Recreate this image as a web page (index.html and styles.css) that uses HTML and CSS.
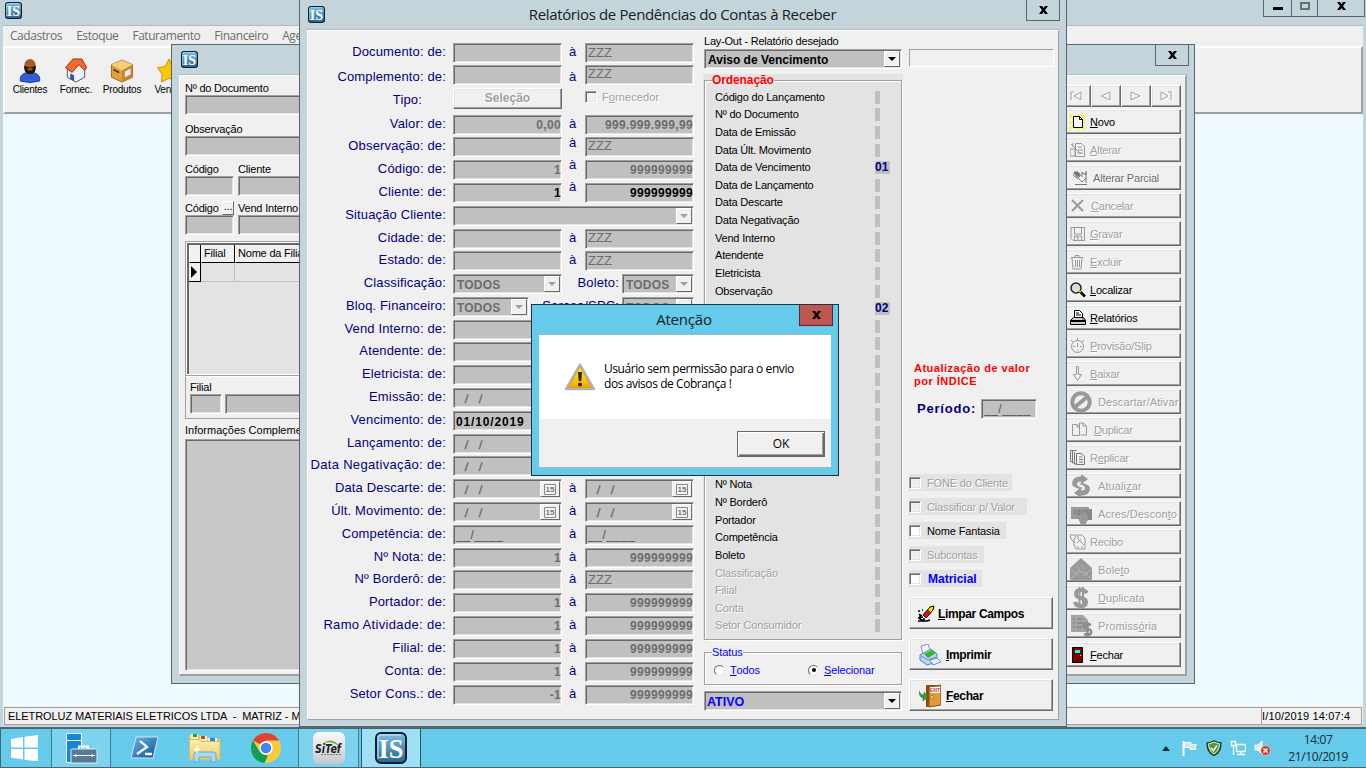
FILE: index.html
```html
<!DOCTYPE html>
<html lang="pt-BR">
<head>
<meta charset="utf-8">
<title>Relatórios de Pendências do Contas à Receber</title>
<link rel="stylesheet" href="styles.css">
</head>
<body>
<svg class="defs" aria-hidden="true">
  <defs>
    <linearGradient id="isg" x1="0" y1="0" x2="0" y2="1"><stop offset="0" stop-color="#7fc0e6"/><stop offset="1" stop-color="#25658f"/></linearGradient>
    <linearGradient id="warn" x1="0" y1="0" x2="0" y2="1"><stop offset="0" stop-color="#fff21a"/><stop offset="1" stop-color="#f5a800"/></linearGradient>
    <linearGradient id="blue" x1="0" y1="0" x2="1" y2="1"><stop offset="0" stop-color="#6db8e8"/><stop offset="1" stop-color="#0d4f92"/></linearGradient>
    <linearGradient id="folder" x1="0" y1="0" x2="0" y2="1"><stop offset="0" stop-color="#fff0b4"/><stop offset="1" stop-color="#ecc860"/></linearGradient>
    <symbol id="is" viewBox="0 0 32 32"><rect x="1" y="1" width="30" height="30" rx="5" fill="url(#isg)" stroke="#10202c" stroke-width="2"/><path d="M3 27V6q0-3 3-3h20" fill="none" stroke="#b4def4" stroke-width="1.300"/><text x="16" y="26" text-anchor="middle" textLength="25" lengthAdjust="spacingAndGlyphs" class="is-text">IS</text></symbol>
    <symbol id="cal" viewBox="0 0 12 11"><path d="M.5.500h11v10H.5z" fill="#f4f4f4" stroke="#888"/><text x="6" y="8.200" text-anchor="middle" class="cal-text">15</text></symbol>
  </defs>
</svg>

<main class="desktop">
  <section class="win main-win">
    <header class="main-title">
      <svg class="is16"><use href="#is"/></svg>
      <div class="caption-buttons">
        <span class="cap-min"><svg width="10" height="10"><path d="M0 6h10v3H0z"/></svg></span>
        <span class="cap-max"><svg width="10" height="8"><path d="M1 1h8v6H1z" fill="none" stroke="#667075" stroke-width="2"/></svg></span>
        <span class="cap-close"><svg width="9" height="8"><path d="M0 0h3l1.500 2L6 0h3L6 4l3 4H6L4.500 6 3 8H0l3-4z"/></svg></span>
      </div>
    </header>
    <nav class="menu"><span>Cadastros</span><span>Estoque</span><span>Faturamento</span><span>Financeiro</span><span>Agenda</span></nav>
    <div class="toolbar">
      <div class="tool"><svg width="24" height="26" viewBox="0 0 24 26"><path d="M2 24c-1-6 3-9 10-9s11 3 10 9q-10 3-20 0z" fill="#2f5fd8" stroke="#1c3a94"/><ellipse cx="12" cy="8" rx="6" ry="7" fill="#a85c24"/><path d="M6 8q6 3 12 0 1 8-6 9-7-1-6-9z" fill="#20140e"/><path d="M9 11q3-2 6 0l-1 2h-4z" fill="#985020"/></svg><b>Clientes</b></div>
      <div class="tool"><svg width="24" height="26" viewBox="0 0 24 26"><path d="M3 11l9-9 9 9v9l-9 5-9-5z" fill="#eef2f8" stroke="#555"/><path d="M1 10L9 1h9l5 9-2 3-6-6-7 8z" fill="#f46a28" stroke="#9c2c10"/><path d="M6 16l4 2v6l-4-2z" fill="#2e55a8"/></svg><b>Fornec.</b></div>
      <div class="tool"><svg width="26" height="26" viewBox="0 0 26 26"><path d="M2 7l11-5 11 5v13l-11 5-11-5z" fill="#e0a03c" stroke="#9c6820"/><path d="M2 7l11-5 11 5-11 6z" fill="#f6cd7c"/><path d="M13 13l11-6v13l-11 5z" fill="#c98628"/><path d="M16 14l6-3v6l-6 3z" fill="#e8f0ff"/><path d="M4 13l6 3v-2l-6-3z" fill="#5c3a10"/></svg><b>Produtos</b></div>
      <div class="tool"><svg width="26" height="26" viewBox="0 0 26 26"><path d="M13 1l3 7 9 1-5 8 2 8-9-4-8 4 1-8-5-7 8-1z" fill="#fcc800" stroke="#d08800"/></svg><b>Vendas</b></div>
    </div>
    <div class="mdi"></div>
    <footer class="status"><span class="status-main">ELETROLUZ MATERIAIS ELETRICOS LTDA &nbsp;- &nbsp;MATRIZ - M</span><span class="status-time">I/10/2019 14:07:4</span></footer>
  </section>

  <section class="win doc-win">
    <header class="doc-title"><svg class="is16"><use href="#is"/></svg><span class="close"><svg width="9" height="8"><path d="M0 0h3l1.500 2L6 0h3L6 4l3 4H6L4.500 6 3 8H0l3-4z"/></svg></span></header>
    <div class="doc-body">
      <div class="doc-left">
        <div class="lbl">Nº do Documento</div><div class="field first"></div>
        <div class="lbl">Observação</div><div class="field"></div>
        <div class="pair"><div><div class="lbl">Código</div><div class="field"></div></div><div><div class="lbl">Cliente</div><div class="field"></div></div></div>
        <div class="pair"><div><div class="lbl">Código <i class="dots">...</i></div><div class="field"></div></div><div><div class="lbl">Vend Interno</div><div class="field"></div></div></div>
        <div class="table">
          <div class="tr th"><span></span><span>Filial</span><span>Nome da Filial</span></div>
          <div class="tr"><span class="sel"><svg width="6" height="12"><path d="M0 0l6 6-6 6z"/></svg></span><span></span><span></span></div>
        </div>
        <div class="branch"><div class="lbl">Filial</div><div class="branch-row"><div class="field"></div><div class="field"></div></div></div>
        <div class="lbl info">Informações Complementares</div>
        <div class="field memo"></div>
      </div>
      <aside class="actions">
        <div class="navs">
          <span><svg width="12" height="10"><path d="M1 9V1h3M11 1v8L4 5l7-4"/></svg></span><span><svg width="12" height="10"><path d="M10 1v8L1 5l9-4"/></svg></span><span><svg width="12" height="10"><path d="M1 1v8l9-4-9-4"/></svg></span><span><svg width="12" height="10"><path d="M1 1v8l7-4-7-4M8 1h3v8"/></svg></span>
        </div>
        <div class="act on"><svg width="16" height="16"><path d="M0 1l3 3M15 1l-3 3M0 15l3-3M15 15l-3-3M0 8h3M15 8h-3M8 0v2M8 14v2" stroke="#ff0" stroke-width="2"/><path d="M3.500 2.500h6l3 3v8h-9z" fill="#fff" stroke="#000"/><path d="M9.500 2.500v3h3" fill="none" stroke="#000"/></svg><span><u>N</u>ovo</span></div>
        <div class="act"><svg width="16" height="16" class="ln"><path d="M5.500 1.500h6l3 3v10h-9zM1 2l10 10M0 7h5v7H0zM3 1v4M8 5h4M8 8h5M7 11h6"/></svg><span><u>A</u>lterar</span></div>
        <div class="act mid i3"><svg width="16" height="16" class="ln dark"><path d="M1.500 2.500h4l2 3-3 3-4-3zM8 2l5 3V1M5 8l4 4 4-4V2M13 8v5M2 14.500h12M9 3v4"/><path d="M1 2h4l2 3-3 2z" fill="#777"/></svg><span>Alterar Parcial</span></div>
        <div class="act i1"><svg width="16" height="16" class="ln thick"><path d="M2 2l11 11M13 2L2 13"/></svg><span><u>C</u>ancelar</span></div>
        <div class="act"><svg width="16" height="16" class="ln"><path d="M1 1.500h13.500v13H3l-2-2zM4.500 2v6h7V2M4.500 14v-4h7v4M6 11h2v3"/></svg><span><u>G</u>ravar</span></div>
        <div class="act"><svg width="16" height="16" class="ln"><path d="M1 3.500h12M5 3V1.500h4V3M2 4l1 11h8l1-11M5.500 6v7M7.500 6v7M9.500 6v7"/></svg><span><u>E</u>xcluir</span></div>
        <div class="act on"><svg width="16" height="16"><circle cx="6" cy="6" r="5" fill="#ddd" stroke="#222" stroke-width="1.500"/><path d="M10 9.500l5 5" stroke="#000" stroke-width="2.500"/><path d="M9 9l2 1" stroke="#e0d800" stroke-width="1.500"/></svg><span><u>L</u>ocalizar</span></div>
        <div class="act on"><svg width="16" height="16"><path d="M4.500 7.500V.500h5l3 3v4" fill="#fff" stroke="#000"/><path d="M6 3h3M6 5h5" stroke="#000"/><path d="M.5 10.500l3-3h10l2 3v4H.5z" fill="#ccc" stroke="#000"/><path d="M0 11h16" stroke="#000" stroke-width="2"/><path d="M12 9h2" stroke="red"/></svg><span><u>R</u>elatórios</span></div>
        <div class="act"><svg width="16" height="16" class="ln"><circle cx="7.500" cy="8.500" r="6"/><path d="M7.500 0v3M7.500 5v4M1 2l2 2M14 2l-2 2M3 8.500h2M10 8.500h2M7.500 12v1"/></svg><span><u>P</u>rovisão/Slip</span></div>
        <div class="act"><svg width="16" height="16" class="ln"><path d="M6.500.500h2v8h3l-4 6-4-6h3z"/></svg><span><u>B</u>aixar</span></div>
        <div class="act i8"><svg width="24" height="24"><circle cx="12" cy="12" r="8.700" fill="none" stroke="#999" stroke-width="4"/><path d="M6 17L18 7" stroke="#999" stroke-width="4"/></svg><span>Descartar/Ativar</span></div>
        <div class="act i4"><svg width="18" height="16" class="ln"><path d="M2.500 2.500h5l2 2v9h-7zM9.500 5v-4h4l3 3v9h-6M13 1v3h3M7 3v2h2"/></svg><span><u>D</u>uplicar</span></div>
        <div class="act"><svg width="16" height="16" class="ln dark"><path d="M.5.500h6M.5.500v11h2M2.500 1v12h2M4.500 2v12h2M6.500 3.500h5l3 3v8h-8zM9 7h3M9 9.500h4M9 12h4"/></svg><span>R<u>e</u>plicar</span></div>
        <div class="act i8"><svg width="24" height="24"><path d="M3 9Q4 2 12 2.500V0l7 5-7 5.500V7.500Q8 7.500 8 10q0 2 3 3l3 1q-3 2-6 0-5-1-5-5z" fill="#999"/><path d="M21 15q-1 7-9 6.500V24l-7-5 7-5.500v3q4 0 4-2.500 0-2-3-3l-3-1q3-2 6 0 5 1 5 5z" fill="#999"/></svg><span>Atuali<u>z</u>ar</span></div>
        <div class="act i8"><svg width="24" height="24"><path d="M2 5h18v12H2z" fill="#999"/><path d="M20 7h3v11h-5" fill="#888"/><path d="M6 8v5M9 8.500h2v4H9zM14 13V9l4-1v5" fill="none" stroke="#777"/><path d="M8 14l3 2v-4h6l2 6-3 5h-4z" fill="#999"/></svg><span>Acres/Descon<u>t</u>o</span></div>
        <div class="act"><svg width="16" height="16" class="ln"><path d="M0 1h7l-3 4v6l2 4h9V4l-3-3H8v4l6 6M0 1l1 4 4 4M7 9l4-4M7 13h2M11 13h2"/></svg><span>Recibo</span></div>
        <div class="act i8"><svg width="24" height="24"><path d="M1 10L12 0l11 10v13H1z" fill="#999"/><path d="M1 22l8-8h6l8 8M1 11l9 7M23 11l-9 7M8 8l3 5M12 6l3 5" stroke="#b5b5b5" fill="none"/></svg><span>Bole<u>t</u>o</span></div>
        <div class="act i8"><svg width="24" height="24"><path d="M18 7Q16 4 12 4 7 4 7 8q0 3 5 4t5 4q0 4-5 4-5 0-6-4" fill="none" stroke="#999" stroke-width="4"/><path d="M10.500 1v22M14 1v22" stroke="#999" stroke-width="2"/></svg><span><u>D</u>uplicata</span></div>
        <div class="act i8"><svg width="24" height="24"><path d="M2 1h12l5 5v12H2z" fill="#a4a4a4"/><path d="M4 5h2M8 5h5M4 9h2M8 9h7M4 13h2M8 13h5" stroke="#777"/><path d="M22 11q-7-3-7 1 0 2 4 3t3 4q-1 3-7 1M18.500 8v15" stroke="#8c8c8c" stroke-width="2.500" fill="none"/></svg><span>Promiss<u>ó</u>ria</span></div>
        <div class="act on last"><svg width="16" height="16"><path d="M2.500.500h10v15h-10z" fill="#800000" stroke="#000"/><path d="M5 3h5v3H5z" fill="#0ff"/><path d="M10 8h1v1h-1z" fill="#ff0"/></svg><span><u>F</u>echar</span></div>
      </aside>
    </div>
  </section>

  <section class="win rep-win">
    <header class="rep-title"><svg class="is16"><use href="#is"/></svg><h1>Relatórios de Pendências do Contas à Receber</h1><span class="close"><svg width="9" height="8"><path d="M0 0h3l1.500 2L6 0h3L6 4l3 4H6L4.500 6 3 8H0l3-4z"/></svg></span></header>
    <div class="rep-body">
      <div class="form">
        <label>Documento: de:</label><div class="field"></div><em>à</em><div class="field z">ZZZ</div>
        <label class="low">Complemento: de:</label><div class="field"></div><em class="low">à</em><div class="field z up">ZZZ</div>
        <label class="low tipo">Tipo:</label><div class="btn sel-btn">Seleção</div><em></em><div class="chk-dis"><i class="box gray"></i><span>F<u>o</u>rnecedor</span></div>
        <label>Valor: de:</label><div class="field n">0,00</div><em>à</em><div class="field n">999.999.999,99</div>
        <label>Observação: de:</label><div class="field"></div><em class="hi">à</em><div class="field z up">ZZZ</div>
        <label>Código: de:</label><div class="field n">1</div><em class="hi2">à</em><div class="field n">999999999</div>
        <label>Cliente: de:</label><div class="field n k">1</div><em class="hi3">à</em><div class="field n k">999999999</div>
        <label>Situação Cliente:</label><div class="wide"><div class="combo dis w241"><span></span><i></i></div></div>
        <label>Cidade: de:</label><div class="field"></div><em>à</em><div class="field z up">ZZZ</div>
        <label>Estado: de:</label><div class="field"></div><em>à</em><div class="field z">ZZZ</div>
        <label>Classificação:</label><div class="wide"><div class="combo dis w109"><span>TODOS</span><i></i></div><label>Boleto:</label><div class="combo dis w72"><span>TODOS</span><i></i></div></div>
        <label>Bloq. Financeiro:</label><div class="wide"><div class="combo dis w76"><span>TODOS</span><i></i></div><label>Serasa/SPC:</label><div class="combo dis w72"><span>TODOS</span><i></i></div></div>
        <label>Vend Interno: de:</label><div class="field"></div><em></em><div class="field"></div>
        <label>Atendente: de:</label><div class="field"></div><em></em><div class="field"></div>
        <label>Eletricista: de:</label><div class="field"></div><em></em><div class="field"></div>
        <label>Emissão: de:</label><div class="field d"><s>/</s><s>/</s></div><em></em><div class="field"></div>
        <label>Vencimento: de:</label><div class="field dk">01/10/2019</div><em></em><div class="field"></div>
        <label>Lançamento: de:</label><div class="field d"><s>/</s><s>/</s></div><em></em><div class="field"></div>
        <label class="long">Data Negativação: de:</label><div class="field d"><s>/</s><s>/</s></div><em></em><div class="field"></div>
        <label>Data Descarte: de:</label><div class="field d"><s>/</s><s>/</s><b class="cal"><svg><use href="#cal"/></svg></b></div><em>à</em><div class="field d"><s>/</s><s>/</s><b class="cal"><svg><use href="#cal"/></svg></b></div>
        <label>Últ. Movimento: de:</label><div class="field d"><s>/</s><s>/</s><b class="cal"><svg><use href="#cal"/></svg></b></div><em>à</em><div class="field d"><s>/</s><s>/</s><b class="cal"><svg><use href="#cal"/></svg></b></div>
        <label>Competência: de:</label><div class="field c">__/____</div><em>à</em><div class="field c">__/____</div>
        <label>Nº Nota: de:</label><div class="field n">1</div><em>à</em><div class="field n">999999999</div>
        <label>Nº Borderô: de:</label><div class="field"></div><em>à</em><div class="field z">ZZZ</div>
        <label>Portador: de:</label><div class="field n">1</div><em>à</em><div class="field n">999999999</div>
        <label class="long">Ramo Atividade: de:</label><div class="field n">1</div><em>à</em><div class="field n">999999999</div>
        <label>Filial: de:</label><div class="field n">1</div><em>à</em><div class="field n">999999999</div>
        <label>Conta: de:</label><div class="field n">1</div><em>à</em><div class="field n">999999999</div>
        <label>Setor Cons.: de:</label><div class="field n">-1</div><em>à</em><div class="field n">999999999</div>
      </div>

      <div class="order-col">
        <div class="layout-label">Lay-Out - Relatório desejado</div>
        <div class="combo layout"><span>Aviso de Vencimento</span><i></i></div>
        <div class="group-bg"><fieldset class="order"><legend>Ordenação</legend>
          <ul>
            <li>Código do Lançamento<i></i></li><li>Nº do Documento<i></i></li><li>Data de Emissão<i></i></li><li>Data Últ. Movimento<i></i></li><li>Data de Vencimento<i>01</i></li><li>Data de Lançamento<i></i></li><li>Data Descarte<i></i></li><li>Data Negativação<i></i></li><li>Vend Interno<i></i></li><li>Atendente<i></i></li><li>Eletricista<i></i></li><li>Observação<i></i></li><li>Cliente<i>02</i></li>
            <li><i></i></li><li><i></i></li><li><i></i></li><li><i></i></li><li><i></i></li><li><i></i></li><li><i></i></li><li><i></i></li><li><i></i></li>
            <li>Nº Nota<i></i></li><li>Nº Borderô<i></i></li><li>Portador<i></i></li><li>Competência<i></i></li><li>Boleto<i></i></li><li class="off">Classificação<i></i></li><li class="off">Filial<i></i></li><li class="off">Conta<i></i></li><li class="off">Setor Consumidor<i></i></li>
          </ul>
        </fieldset></div>
        <fieldset class="stat"><legend>Status</legend><div class="radios"><span class="radio"><i></i><u>T</u>odos</span><span class="radio on"><i></i><u>S</u>elecionar</span></div></fieldset>
        <div class="combo ativo"><span>ATIVO</span><i></i></div>
      </div>

      <div class="side-col">
        <div class="flat"></div>
        <p class="indice">Atualização de valor<br>por ÍNDICE</p>
        <div class="periodo"><span>Período:</span><div class="field c">__/____</div></div>
        <div class="checks">
          <div class="off w103"><i class="box gray"></i>FONE do Cliente</div>
          <div class="off w118"><i class="box gray"></i>Classificar p/ Valor</div>
          <div class="w97"><i class="box"></i>Nome Fantasia</div>
          <div class="off w75"><i class="box gray"></i>Subcontas</div>
          <div class="w73 mat"><i class="box"></i>Matricial</div>
        </div>
        <div class="btn cmd limpar"><svg width="18" height="18"><path d="M6 10l7-8 4-1-1 4-7 8z" fill="#ffe000" stroke="#000"/><path d="M6 10l5-5 3 3-5 5z" fill="#e01010" stroke="#000" stroke-width=".600"/><path d="M1 6h2M5 5h1M2 9l3 2M1 13l5-1M1 16h9l3-1M3 10v4l4 2M7 13v3" stroke="#000" stroke-width="1.500" fill="none"/></svg><span><u>L</u>impar Campos</span></div>
        <div class="btn cmd"><svg width="22" height="22"><path d="M2 2l7-2 3 9-8 1z" fill="#eef5ff" stroke="#7698cc"/><path d="M1 11l11-6 6 5v8l-10 3-7-5z" fill="#bcd4f8" stroke="#5c7cbc"/><path d="M5 10l8-4 4 3-8 5z" fill="#35b820"/><path d="M11 16l7-2 4 4-8 3z" fill="#e8f2ff" stroke="#6f8fc8"/><path d="M2 12l7 4 8-3" stroke="#6688c4" fill="none"/></svg><span><u>I</u>mprimir</span></div>
        <div class="btn cmd"><svg width="22" height="24"><path d="M7 1h13v20l-9 2H7z" fill="#8c4c12"/><path d="M10 3l12-2v20l-12 2z" fill="#e29a38" stroke="#8c5010"/><path d="M11 3h10v6H11z" fill="#fff"/><text x="11" y="7.500" class="exit">EXIT</text><circle cx="13" cy="13" r="1.500" fill="#ffe27c" stroke="#7c4810" stroke-width=".500"/><path d="M0 7q1 4 5 4V8l4 5-5 4v-3Q0 13 0 7z" fill="#2fa03c" stroke="#187028" stroke-width=".500"/></svg><span><u>F</u>echar</span></div>
      </div>
    </div>
  </section>

  <section class="dialog">
    <header><h2>Atenção</h2><span class="close red"><svg width="9" height="8"><path d="M0 0h3l1.500 2L6 0h3L6 4l3 4H6L4.500 6 3 8H0l3-4z"/></svg></span></header>
    <div class="dialog-body">
      <div class="msg"><svg width="32" height="28" viewBox="0 0 32 28"><path d="M16 1.500L30 26H2z" fill="#c9cdd4" stroke="#b0b4bc" stroke-width="2.500" stroke-linejoin="round"/><path d="M16 4L27.500 24.500h-23z" fill="url(#warn)" stroke="#d89c10" stroke-width=".800"/><path d="M14 9h4l-.700 9h-2.600z" fill="#2c2810"/><circle cx="16" cy="21.500" r="2" fill="#2c2810"/></svg><p>Usuário sem permissão para o envio<br>dos avisos de Cobrança !</p></div>
      <div class="dialog-foot"><span class="ok">OK</span></div>
    </div>
  </section>

  <footer class="taskbar">
    <span class="task start"><svg width="28" height="26"><path d="M0 4l12-2v10.500H0zM13.500 1.800L27 0v12.500H13.500zM0 14h12v10.500L0 22.700zM13.500 14H27v12.500l-13.500-1.800z" fill="#fff"/></svg></span>
    <span class="task run"><svg width="34" height="34"><path d="M2.500 2.500h15v29h-15z" fill="#1588dc" stroke="#fff"/><path d="M2 9.500h16" stroke="#fff"/><path d="M15 18v-2.500h9V18" fill="none" stroke="#fff" stroke-width="2"/><path d="M7 19q0-1 1-1h24q1 0 1 1v13H7z" fill="#587a92" stroke="#d6edf6"/><path d="M9 24.500h22M12 23v3M28 23v3" stroke="#fff"/></svg></span>
    <span class="task ps"><svg width="28" height="24"><path d="M5 1h22l-5 21H0z" fill="url(#blue)" stroke="#d0e8f6"/><path d="M9 5l7 6-10 7M14 18h7" stroke="#fff" stroke-width="2.300" fill="none"/></svg></span>
    <span class="task folder"><svg width="32" height="30"><path d="M0 2h10l2 3h9l2 1h8v21H0z" fill="#e8c766"/><path d="M2 1h7v5H2z" fill="#fff3c4"/><path d="M4 1h4v3H4z" fill="#22a43c"/><path d="M11 3h7v5h-7z" fill="#fff3c4"/><path d="M12 3h4v3h-4z" fill="#d4452c"/><path d="M19 5h9v4h-9z" fill="#fff3c4"/><path d="M21 5h5v3h-5z" fill="#2a84d8"/><path d="M.5 6.500h10l2 2h18.500v18H.5z" fill="url(#folder)" stroke="#dcbc5c"/><path d="M5 29v-7q0-3 3-3h16q3 0 3 3v7h-5v-5H10v5z" fill="#a8dcf4" stroke="#6aaacf"/><path d="M8 13v7M4.500 16.500h7" stroke="#fff" stroke-width="1.300"/></svg></span>
    <span class="task chrome"><svg width="30" height="30" viewBox="0 0 30 30"><circle cx="15" cy="15" r="15" fill="#fbcb3c"/><path d="M2 7.500A15 15 0 0 1 28 7.500H15L8.500 11z" fill="#db4437"/><path d="M2 7.500L8.700 18.600Q11 22.500 17 22.300L13.500 30A15 15 0 0 1 2 7.500z" fill="#109d58"/><circle cx="15" cy="15" r="6.700" fill="#fff"/><circle cx="15" cy="15" r="5.300" fill="#4285f4"/></svg></span>
    <span class="task run sitef"><svg width="32" height="32"><defs><linearGradient id="sg" x1="0" y1="0" x2="0" y2="1"><stop offset="0" stop-color="#fafafa"/><stop offset="1" stop-color="#c4c8cc"/></linearGradient></defs><rect width="32" height="32" rx="6" fill="url(#sg)"/><path d="M10 11q10-7 18 5-8-8-18-5z" fill="#62b02c"/><text x="2" y="21" class="sitef-text" textLength="26" lengthAdjust="spacingAndGlyphs">SiTef</text><path d="M8 22.500h21" stroke="#777" stroke-dasharray="2 1"/></svg></span>
    <span class="task active"><svg width="32" height="32"><use href="#is"/></svg></span>
    <div class="tray">
      <svg width="8" height="5"><path d="M0 5l4-5 4 5z" fill="#172c35"/></svg>
      <svg width="16" height="16"><path d="M1.500 1v15" stroke="#fff" stroke-width="2"/><path d="M2.500 2.500h6l1 2h5l-1.500 3L14 9.500H8.500l-1-2h-5z" fill="#fff" fill-opacity=".600" stroke="#fff"/></svg>
      <svg width="16" height="16"><path d="M8 .800Q11 3 15 3q0 10-7 12.500Q1 13 1 3q4 0 7-2.200z" fill="#4e9a38" stroke="#26382a" stroke-width="1.300"/><path d="M8 2q3 1.500 5.500 1.800Q13 11 8 14Q3 11 2.500 3.800 5 3.500 8 2z" fill="none" stroke="#dfe8da"/><path d="M5 8l2.500 2.500L11 5.500" fill="none" stroke="#fff" stroke-width="1.500"/></svg>
      <svg width="16" height="16"><path d="M6.500 4.500h9v7h-9zM11 12v2M7 14.500h8M1.500 1.500h4v4h-4zM3.500 6v9" fill="none" stroke="#fff" stroke-width="1.300"/></svg>
      <svg width="17" height="16"><path d="M1 5h3l4-4v13l-4-4H1z" fill="#d8f0fa" stroke="#fff"/><circle cx="11.500" cy="10.500" r="4.800" fill="#d9382c" stroke="#f4d8d4" stroke-width=".600"/><path d="M9.500 8.500l4 4M13.500 8.500l-4 4" stroke="#fff" stroke-width="1.500"/></svg>
      <div class="clock">14:07<br>21/10/2019</div>
    </div>
  </footer>
</main>
</body>
</html>
```
FILE: styles.css
```css
* { box-sizing: border-box; }
body { margin: 0; font: 11px/14px "Liberation Sans", Arial, sans-serif; color: #000; letter-spacing: -.2px; }
i, em { font-style: normal; }
s { text-decoration: none; }
h1, h2, p, ul, fieldset { margin: 0; padding: 0; font-weight: 400; }
svg { display: block; flex: none; }
.defs { position: absolute; width: 0; height: 0; }
.desktop { position: relative; width: 1366px; height: 768px; overflow: hidden; background: #66caea; }
.win { position: absolute; background: #c3d5db; display: flex; flex-direction: column; }
.is16 { width: 17px; height: 17px; }
.is-text { font: bold 28px "Liberation Serif", serif; fill: #fff; letter-spacing: 0; }
.cal-text { font: bold 8px "Liberation Sans", sans-serif; fill: #777; letter-spacing: 0; }
.sitef-text { font: italic bold 12px "DejaVu Sans", sans-serif; fill: #222; letter-spacing: 0; }
.exit { font: bold 4.500px "Liberation Sans", sans-serif; fill: #d02020; letter-spacing: 0; }

/* shared controls */
.field { height: 20px; background: #c0c0c0; border: 1px solid; border-color: #a0a0a0 #fff #fff #a0a0a0; box-shadow: inset 1px 1px #696969, inset -1px -1px #e3e3e3; color: #6d6d6d; white-space: nowrap; overflow: hidden; }
.btn, .act, .navs span { background: #f0f0f0; border: 1px solid; border-color: #fff #696969 #696969 #fff; box-shadow: inset -1px -1px #a0a0a0, inset 1px 1px #e3e3e3; }
.combo { display: flex; height: 20px; background: #c0c0c0; border: 1px solid; border-color: #a0a0a0 #fff #fff #a0a0a0; box-shadow: inset 1px 1px #696969, inset -1px -1px #e3e3e3; font: bold 12px/20px "Liberation Sans", sans-serif; padding: 1px; letter-spacing: 0; }
.combo span { flex: 1; padding-left: 2px; line-height: 18px; white-space: nowrap; }
.combo i { width: 16px; height: 16px; background: #f0f0f0; border: 1px solid; border-color: #fff #696969 #696969 #fff; display: flex; align-items: center; justify-content: center; }
.combo i::after { content: ""; border: 4px solid transparent; border-top-color: #000; border-bottom: 0; }
.combo.dis { color: #6d6d6d; }
.combo.dis i::after { border-top-color: #a0a0a0; }
.close { width: 34px; height: 21px; border: 1px solid #5a646b; border-top: 0; display: flex; align-items: center; justify-content: center; }
.close.red { background: #c1554f; border-color: #4a2d30; }
.box { width: 12px; height: 12px; background: #fff; border: 1px solid; border-color: #a0a0a0 #fff #fff #a0a0a0; box-shadow: inset 1px 1px #696969, inset -1px -1px #e3e3e3; flex: none; }
.box.gray { background: #f0f0f0; }

/* main window */
.main-win { left: 0; top: 0; width: 1366px; height: 728px; padding: 0 3px 2px; border-bottom: 1px solid #5a646b; }
.main-title { height: 26px; flex: none; display: flex; justify-content: space-between; padding: 2px 0 0 2px; border-bottom: 1px solid #aebbc2; }
.caption-buttons { display: flex; height: 17px; margin: -2px -2px 0 0; border: 1px solid #5a646b; border-top: 0; }
.caption-buttons span { display: flex; justify-content: center; align-items: center; padding-bottom: 4px; border-right: 1px solid #5a646b; }
.caption-buttons .cap-min { width: 28px; }
.caption-buttons .cap-max { width: 26px; }
.caption-buttons .cap-close { width: 46px; border: 0; }
.menu { height: 20px; flex: none; background: #f0f0f0; display: flex; gap: 14px; padding-left: 7px; font: 12px/20px "Open Sans", sans-serif; color: #6d6d6d; letter-spacing: -.44px; }
.toolbar { height: 68px; flex: none; background: #f0f0f0; border: 2px solid; border-color: #fff #a0a0a0 #a0a0a0 #fff; display: flex; padding: 10px 0 0 2px; }
.tool { width: 46px; display: flex; flex-direction: column; align-items: center; white-space: nowrap; }
.tool:last-child { margin-left: 1px; }
.tool svg { height: 25px; }
.tool b { font: 10px/14px "Liberation Sans", sans-serif; letter-spacing: -.2px; }
.tool:last-child b { padding-left: 3px; }
.mdi { flex: 1; background: #f0fbff; }
.status { height: 19px; flex: none; background: #f0f0f0; display: flex; justify-content: space-between; padding: 1px 1px 0; line-height: 16px; font-size: 11px; white-space: pre; }
.status-main { border: 1px solid #a0a0a0; border-right: 0; flex: 1; padding-left: 3px; letter-spacing: -.08px; }
.status-time { width: 101px; border: 1px solid #a0a0a0; letter-spacing: .15px; }

/* document window */
.doc-win { left: 171px; top: 44px; width: 1024px; height: 640px; border: 1px solid #5a646b; padding: 0 7px 7px; }
.doc-title { height: 30px; flex: none; display: flex; justify-content: space-between; padding: 6px 0 0 2px; border-bottom: 1px solid #aebbc2; }
.doc-title .close { margin: -6px -2px 0 0; }
.doc-body { flex: 1; background: #f0f0f0; border: 1px solid #fff; border-right: 2px solid #a0a0a0; border-bottom: 2px solid #a0a0a0; display: flex; justify-content: space-between; padding: 5px 4px 0 5px; min-height: 0; }
.doc-left { width: 300px; display: flex; flex-direction: column; }
.doc-left .lbl { height: 14px; line-height: 14px; white-space: nowrap; display: flex; justify-content: space-between; flex: none; }
.doc-left > .field { height: 20px; margin-bottom: 6px; flex: none; }
.doc-left > .first { margin-bottom: 7px; }
.pair { display: grid; grid-template-columns: 49px 1fr; gap: 4px; margin-bottom: 5px; }
.pair .dots { width: 12px; height: 14px; border: 1px solid; border-color: #fff #696969 #696969 #fff; line-height: 9px; text-align: center; }
.table { height: 135px; margin: 1px 0 0; border: 1px solid #a0a0a0; box-shadow: inset 0 0 0 1px #fff, inset 3px 3px #696969; background: #e3e3e3; padding: 3px 0 0 3px; flex: none; }
.tr { display: grid; grid-template-columns: 12px 34px 1fr; height: 19px; line-height: 17px; }
.tr span { border-right: 1px solid #c0c0c0; border-bottom: 1px solid #c0c0c0; padding-left: 2px; }
.tr.th { height: 18px; }
.tr.th span { background: #f0f0f0; border-color: #000; border-left: 1px solid #fff; }
.tr .sel { background: #f0f0f0; border-color: #000; display: flex; align-items: center; }
.branch { height: 43px; border: 1px solid #a0a0a0; border-top-color: #fff; padding: 3px 4px; flex: none; }
.branch-row { display: grid; grid-template-columns: 32px 1fr; gap: 3px; }
.doc-left .info { margin-top: 4px; height: 16px; letter-spacing: 0; }
.doc-left > .memo { height: 232px; margin: 0; background: #c8c8c8; }
.actions { width: 120px; margin: 4px 0 0; display: flex; flex-direction: column; gap: 3px; }
.navs { display: grid; grid-template-columns: repeat(4, 30px); height: 22px; margin-bottom: -1px; }
.navs span { display: flex; align-items: center; justify-content: center; width: 30px; }
.navs svg { fill: none; stroke: #a0a0a0; filter: drop-shadow(1px 1px #fff); }
.act { height: 25px; flex: none; display: flex; align-items: center; padding: 0 0 0 8px; gap: 4px; color: #a0a0a0; text-shadow: 1px 1px #fff; white-space: nowrap; }
.act.on { color: #000; text-shadow: none; }
.act.mid { color: #6d6d6d; }
.act.i1 { gap: 5px; }
.act.i3 { padding-left: 11px; }
.act.i4 { gap: 6px; }
.act.i8 { gap: 5px; padding-left: 7px; letter-spacing: .1px; }
.act.last { margin-top: 1px; }
.ln { fill: none; stroke: #999; }
.ln.dark { stroke: #777; }
.ln.thick { stroke-width: 2; }

/* report window */
.rep-win { left: 299px; top: 0; width: 768px; height: 728px; border: 1px solid #5a646b; border-top: 0; border-bottom: 2px solid #5a646b; padding: 0 7px 6px; }
.rep-title { height: 30px; flex: none; border-bottom: 1px solid #aebbc2; display: grid; grid-template-columns: 34px 1fr 34px; padding: 0 0 0 1px; }
.rep-title .is16 { margin-top: 6px; }
.rep-title h1 { font: 15px/29px "Open Sans", sans-serif; letter-spacing: -.36px; text-align: center; white-space: nowrap; color: #172025; padding-right: 2px; }
.rep-title .close { margin-left: 1px; width: 34px; }
.rep-body { flex: 1; min-height: 0; background: #f0f0f0; border: 1px solid #fff; border-right-color: #a0a0a0; border-bottom-color: #a0a0a0; display: flex; padding-right: 4px; }
.form { display: grid; margin-top: 12px; grid-template-columns: 138px 7px 109px 23px 109px; grid-template-rows: 22px 23px 27px 22px 23px 23px 23px 23px 22px 23px 23px 23px 22px 23px 23px 23px 23px 22px 23px 23px 23px 23px 22px 23px 23px 23px 23px 23px 23px; width: 386px; flex: none; }
.form > label { grid-column: 1; text-align: right; justify-self: end; }
.form > label + div { grid-column: 3; }
.form label, .form em { font: 13px/17px "Liberation Sans", sans-serif; letter-spacing: .15px; color: #000080; white-space: nowrap; }
.form label.long { letter-spacing: .33px; }
.form em { padding-left: 7px; }
.form .low { padding-top: 3px; }
.form .tipo { padding-right: 24px; }
.form .hi { margin-top: -3px; }
.form .hi2 { margin-top: -4px; }
.form .hi3 { margin-top: -5px; }
.form > .wide { grid-column: 3 / 6; display: flex; justify-content: space-between; }
.wide label { margin-left: auto; padding-right: 3px; }
.w241 { width: 241px; } .w109 { width: 109px; } .w76 { width: 76px; } .w72 { width: 72px; }
.wide .combo { letter-spacing: .2px; }
.z { font-size: 13px; line-height: 18px; padding-left: 2px; letter-spacing: 0; }
.z.up { line-height: 16px; }
.n { font: bold 12px/19px "Liberation Sans", sans-serif; letter-spacing: .33px; text-align: right; }
.n.k, .dk { color: #000; }
.dk { font: bold 12px/20px "Liberation Sans", sans-serif; letter-spacing: .85px; padding-left: 2px; }
.d { display: flex; font: bold 12px/20px "Liberation Sans", sans-serif; padding-left: 11px; }
.d s { width: 14px; transform: skewX(-8deg); }
.cal { margin: 1px 1px 0 auto; width: 20px; height: 16px; background: #f0f0f0; border: 1px solid; border-color: #fff #696969 #696969 #fff; padding: 2px 3px; }
.cal svg { width: 12px; height: 11px; }
.c { font: 12px/18px "Liberation Sans", sans-serif; letter-spacing: .6px; padding-left: 2px; color: #555; }
.sel-btn { height: 21px; font: bold 12px/19px "Liberation Sans", sans-serif; letter-spacing: 0; text-align: center; color: #a0a0a0; text-shadow: 1px 1px #fff; }
.chk-dis { display: flex; gap: 5px; padding-top: 3px; color: #a0a0a0; text-shadow: 1px 1px #fff; letter-spacing: .1px; }
.chk-dis span { line-height: 12px; }

.order-col { width: 200px; flex: none; margin-left: 10px; }
.layout-label { height: 18px; line-height: 20px; letter-spacing: -.22px; white-space: nowrap; }
.combo.layout { width: 198px; }
.group-bg { margin: 5px 0 0 -1px; width: 200px; height: 567px; background: #e3e3e3; padding: 0 1px; }
.order, .stat { border: 1px solid #a0a0a0; box-shadow: inset 1px 1px #fff, 1px 1px #fff; min-width: 0; }
.order { height: 566px; }
.order legend { margin-left: 7px; padding: 0; color: #f00; font: bold 12px/12px "Liberation Sans", sans-serif; letter-spacing: -.1px; }
.order ul { list-style: none; padding: 0 0 0 10px; margin-top: 2.400px; }
.order li { height: 17.633px; line-height: 17px; display: flex; justify-content: space-between; align-items: center; padding-right: 11px; white-space: nowrap; }
.order li i { width: 15px; height: 13px; font: bold 12px/13px "Liberation Sans", sans-serif; color: #000080; letter-spacing: .2px; background: #c0c0c0; margin-left: auto; }
.order li i:empty { width: 5px; margin-right: 10px; }
.off { color: #a0a0a0; text-shadow: 1px 1px #fff; letter-spacing: -.15px; }
.stat { width: 198px; height: 39px; margin-top: 5px; }
.stat legend { color: #00f; padding: 0; margin-left: 7px; line-height: 13px; letter-spacing: -.1px; }
.radios { display: grid; grid-template-columns: 94px 1fr; padding: 4px 0 0 9px; color: #00f; }
.radio { display: flex; align-items: center; white-space: nowrap; height: 14px; letter-spacing: -.15px; }
.radio i { width: 11px; height: 11px; border-radius: 50%; background: #fff; border: 1px solid; border-color: #696969 #e3e3e3 #e3e3e3 #696969; margin-right: 5px; display: flex; align-items: center; justify-content: center; }
.radio.on i::after { content: ""; width: 4px; height: 4px; border-radius: 50%; background: #000; }
.combo.ativo { width: 198px; margin-top: 6px; color: #00f; font-size: 12.500px; }
.combo.ativo span { padding-left: 1px; }

.side-col { width: 145px; margin-left: 5px; flex: none; display: flex; flex-direction: column; }
.flat { height: 18px; margin-top: 18px; border: 1px solid; border-color: #a0a0a0 #fff #fff #a0a0a0; flex: none; }
.indice { margin: 295px 0 0 5px; color: #f00; font: bold 11px/13px "Liberation Sans", sans-serif; letter-spacing: .5px; white-space: nowrap; }
.indice::after { content: none; }
.periodo { display: flex; margin: 11px 0 0 8px; }
.periodo span { width: 64px; font: bold 13px/20px "Liberation Sans", sans-serif; letter-spacing: .8px; color: #000080; }
.periodo .field { width: 56px; letter-spacing: .5px; }
.checks { margin: 55px 0 1px; display: flex; flex-direction: column; gap: 7px; }
.checks div { height: 17px; background: #e3e3e3; display: flex; align-items: center; gap: 6px; white-space: nowrap; letter-spacing: -.15px; }
.w103 { width: 103px; } .w118 { width: 118px; } .w97 { width: 97px; } .w75 { width: 75px; } .w73 { width: 73px; }
.checks .mat { color: #00f; font-weight: bold; font-size: 12px; letter-spacing: 0; gap: 7px; }
.cmd { width: 144px; height: 32px; margin-top: 9px; display: flex; align-items: center; gap: 5px; padding: 2px 0 0 9px; font: bold 12px/14px "Liberation Sans", sans-serif; letter-spacing: -.35px; flex: none; }
.cmd.limpar { gap: 3px; padding-left: 7px; }

/* alert dialog */
.dialog { position: absolute; left: 531px; top: 304px; width: 308px; height: 172px; background: #66caea; border: 1px solid #1d323b; padding: 0 7px 7px; display: flex; flex-direction: column; }
.dialog header { height: 29px; flex: none; display: grid; grid-template-columns: 1fr 34px; margin-right: -2px; }
.dialog h2 { font: 15px/29px "Open Sans", sans-serif; letter-spacing: -.2px; text-align: center; padding-left: 30px; color: #172025; }
.dialog-body { flex: 1; border: 1px solid #9ab9c6; border-width: 1px 0; background: #f0f0f0; }
.msg { height: 84px; background: #fff; display: flex; gap: 8px; padding: 28px 0 0 25px; }
.msg p { font: 12px/15px "Open Sans", sans-serif; letter-spacing: -.43px; white-space: nowrap; margin-top: -2px; }
.dialog-foot { display: flex; justify-content: flex-end; padding: 12px 6px 0; }
.ok { width: 88px; height: 26px; border: 1px solid #696969; box-shadow: inset 1px 1px #fff, inset -1px -1px #696969, inset -2px -2px #a0a0a0; font: 12px/24px "Open Sans", sans-serif; text-align: center; }

/* taskbar */
.taskbar { position: absolute; left: 0; top: 728px; width: 1366px; height: 40px; background: #66caea; border: 1px solid #46656f; border-right: 0; display: flex; }
.task { width: 61px; display: flex; align-items: center; justify-content: center; }
.task.start { width: 50px; padding-right: 3px; }
.task.run { width: 60px; background: #7dd2ee; border: 1px solid #37809a; border-width: 0 1px; }
.task.ps { width: 64px; padding-left: 3px; }
.task.folder { padding-right: 1px; }
.task.chrome { padding-right: 2px; width: 62px; }
.task.sitef { width: 61px; }
.task.active { width: 60px; margin-left: 2px; background: #a0dff5; border: 1px solid #27556a; border-width: 0 1px; }
.tray { margin-left: auto; display: flex; align-items: center; gap: 8px; padding-right: 18px; }
.tray > svg:first-child { margin-right: 4px; }
.clock { font: 12px/17px "Open Sans", sans-serif; letter-spacing: -.4px; text-align: center; color: #172c35; margin-left: 9px; }
```
